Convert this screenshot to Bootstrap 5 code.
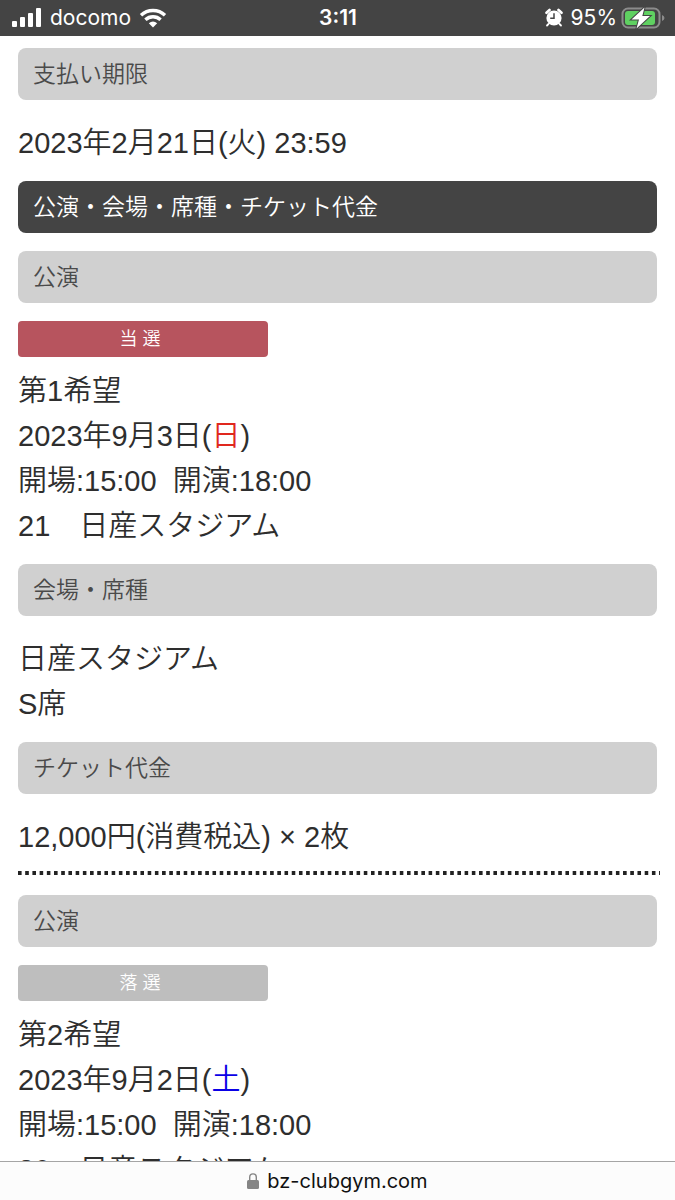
<!DOCTYPE html>
<html lang="ja">
<head>
<meta charset="utf-8">
<meta name="viewport" content="width=device-width, initial-scale=1">
<title>bz-clubgym.com</title>
<link href="https://cdn.jsdelivr.net/npm/bootstrap@5.3.0/dist/css/bootstrap.min.css" rel="stylesheet">
<style>
  body { font-family: "Liberation Sans", "Noto Sans CJK JP", sans-serif; font-weight: 350; font-size: 29px; line-height: 45px; color: #2e2e2e; background: #fff; }
  .status-bar { height: 36px; background: #444; color: #fff; font: 400 21px/36px Inter, sans-serif; padding: 0 10px 0 11px; }
  .status-bar .side { flex: 1 1 0; }
  .status-bar time { font-weight: 600; }
  .status-bar svg, .address-bar svg { display: block; flex: none; }
  .page-body { min-height: 0; padding: 12px 18px 0; }
  .bar { font-size: 23px; font-weight: 350; line-height: 52px; padding: 0 15px; margin: 0 0 18px; border-radius: 8px; background: #d0d0d0; color: #4a4a4a; }
  .bar-dark { background: #444; color: #fff; }
  .info { margin: 0 0 15px; padding-top: 3px; }
  .info p { margin: 0; }
  .result { width: 250px; font-size: 18px; line-height: 36px; padding-right: 6px; margin-bottom: 9px; border-radius: 4px; color: #fff; }
  .result-won { background: #b7545e; }
  .result-lost { background: #bebebe; }
  .sunday { color: #e0281e; }
  .saturday { color: #0a00e6; }
  .wide-gap { white-space: pre; }
  .dots { height: 4px; margin: -4px -3px 20px 0; border: 0; opacity: 1; background: linear-gradient(90deg, #222 55%, transparent 55%) 0 0 / calc(100% / 89) 4px; }
  .address-bar { height: 39px; border-top: 1px solid #a5a5a5; background: #fcfcfc; font: 400 20px/38px Inter, sans-serif; }
  .address-bar a { color: #111; }
</style>
</head>
<body>
<div class="d-flex flex-column vh-100 overflow-hidden">
  <header class="status-bar d-flex align-items-center flex-shrink-0">
    <div class="side d-flex align-items-center">
      <svg width="31" height="20" viewBox="0 0 31 20" fill="#fff" aria-hidden="true"><rect x="1" y="13" width="5" height="6" rx="1"/><rect x="9" y="9" width="5" height="10" rx="1"/><rect x="17" y="5" width="5" height="14" rx="1"/><rect x="25" y="0" width="5" height="19" rx="1"/></svg>
      <span class="ms-2">docomo</span>
      <svg class="ms-2" width="28" height="20" viewBox="0 0 28 20" fill="none" stroke="#fff" stroke-width="3.4" aria-hidden="true"><path d="M2 7.2C8.700 .9 19.300 .9 26 7.200M6.400 11.800C10.700 7.800 17.300 7.800 21.600 11.800"/><path d="M14 19.500L9.800 15.300Q14 11.600 18.200 15.300Z" fill="#fff" stroke="none"/></svg>
    </div>
    <time>3:11</time>
    <div class="side d-flex align-items-center justify-content-end">
      <svg width="18" height="20" viewBox="0 0 18 20" aria-hidden="true"><circle cx="9" cy="10" r="7.600" fill="#fff"/><path d="M1.500 4.800L4.500 2M16.500 4.800L13.500 2" stroke="#fff" stroke-width="2.600" stroke-linecap="round"/><path d="M3.500 16L2 17.500M14.500 16L16 17.500" stroke="#fff" stroke-width="1.800" stroke-linecap="round"/><path d="M9 5.200V10.300H5.200" fill="none" stroke="#444" stroke-width="1.500"/></svg>
      <span class="ms-2">95%</span>
      <svg class="ms-1" width="44" height="24" viewBox="0 0 44 24" aria-hidden="true"><rect x="1.500" y="2.500" width="37" height="19" rx="5.500" fill="none" stroke="#8c8c8c" stroke-width="2"/><path d="M41 9Q43.500 10 43.500 12T41 15Z" fill="#8c8c8c"/><rect x="4" y="5" width="30" height="14" rx="3" fill="#5fd061"/><path d="M23.500 1.500L10.500 13.500H18L15.500 22.500L29 10H21.300Z" fill="#fff" stroke="#444" stroke-width="2" paint-order="stroke"/></svg>
    </div>
  </header>

  <main class="page-body flex-grow-1 overflow-hidden">
    <h2 class="bar">支払い期限</h2>
    <div class="info"><p>2023年2月21日(火) 23:59</p></div>
    <h1 class="bar bar-dark">公演・会場・席種・チケット代金</h1>

    <section>
      <h2 class="bar">公演</h2>
      <div class="result result-won text-center">当 選</div>
      <div class="info">
        <p>第1希望</p>
        <p>2023年9月3日(<span class="sunday">日</span>)</p>
        <p class="wide-gap">開場:15:00  開演:18:00</p>
        <p>21　日産スタジアム</p>
      </div>
      <h2 class="bar">会場・席種</h2>
      <div class="info">
        <p>日産スタジアム</p>
        <p>S席</p>
      </div>
      <h2 class="bar">チケット代金</h2>
      <div class="info"><p>12,000円(消費税込) × 2枚</p></div>
    </section>

    <hr class="dots">

    <section>
      <h2 class="bar">公演</h2>
      <div class="result result-lost text-center">落 選</div>
      <div class="info">
        <p>第2希望</p>
        <p>2023年9月2日(<span class="saturday">土</span>)</p>
        <p class="wide-gap">開場:15:00  開演:18:00</p>
        <p>20　日産スタジアム</p>
      </div>
    </section>
  </main>

  <footer class="address-bar d-flex align-items-center justify-content-center flex-shrink-0">
    <svg width="12" height="16" viewBox="0 0 12 16" aria-hidden="true"><rect x="0" y="7" width="12" height="9" rx="1.500" fill="#858585"/><path d="M2.700 7V4.200a3.300 3.300 0 0 1 6.600 0V7" fill="none" stroke="#858585" stroke-width="1.400"/></svg>
    <a class="ms-2 text-decoration-none" href="#">bz-clubgym.com</a>
  </footer>
</div>
<script src="https://cdn.jsdelivr.net/npm/bootstrap@5.3.0/dist/js/bootstrap.bundle.min.js"></script>
</body>
</html>
